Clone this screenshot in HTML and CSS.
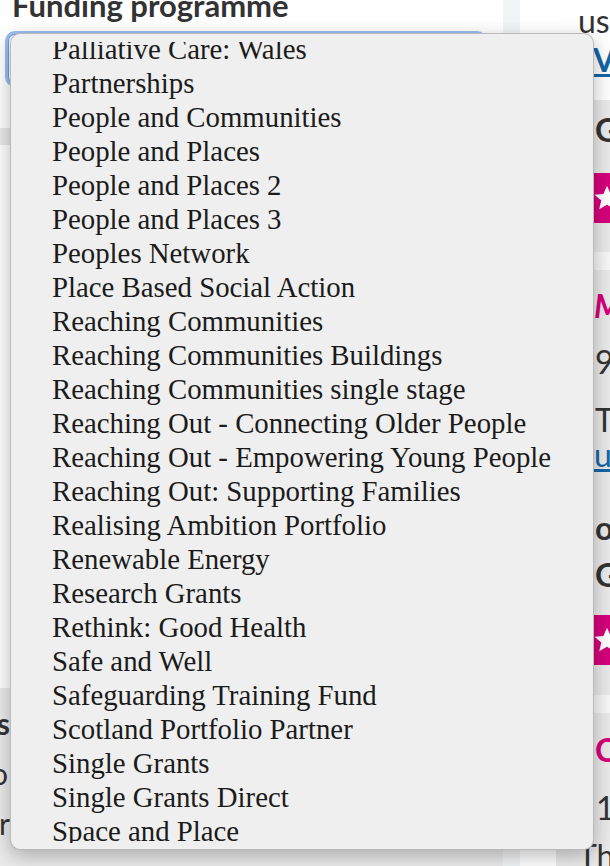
FILE: index.html
```html
<!DOCTYPE html>
<html lang="en">
<head>
<meta charset="utf-8">
<title>Funding programme</title>
<link rel="stylesheet" href="styles.css">
</head>
<body>
<div class="page">
  <div class="main">
    <h2 class="label">Funding programme</h2>
    <div class="select"></div>
    <div class="band"></div>
    <div class="lower">
      <div class="edge edge-bold">Results</div>
      <div class="para">
        <div class="edge edge-o">Apply to</div>
        <div class="edge">or</div>
      </div>
    </div>
  </div>
  <div class="gutter"></div>
  <div class="spacer"></div>
  <div class="aside">
    <div class="a-top">
      <div class="rl l1">useful</div>
      <div class="rl ind-15 l2"><a class="link" href="#">View all</a></div>
    </div>
    <div class="card card-1">
      <div class="rl rb ind-17 g1">Grants</div>
      <div class="pink p1"><svg viewBox="0 0 24 24" width="28" height="28"><path fill="#fff" d="M12 1.5l3.1 7 7.6.7-5.8 5 1.8 7.5L12 17.8l-6.7 3.9 1.8-7.5-5.8-5 7.6-.7z"/></svg></div>
    </div>
    <div class="gap"></div>
    <div class="card card-2">
      <div class="rh ind-16 h1">Music</div>
      <div class="rl ind-17 d1">9 May</div>
      <div class="rp ind-17 t1">The</div>
      <div class="rp ind-16"><a class="link" href="#">ultimate</a></div>
      <div class="rl rb ind-17 o1">online</div>
      <div class="rl rb ind-17 g2">Grants</div>
      <div class="pink p2"><svg viewBox="0 0 24 24" width="28" height="28"><path fill="#fff" d="M12 1.5l3.1 7 7.6.7-5.8 5 1.8 7.5L12 17.8l-6.7 3.9 1.8-7.5-5.8-5 7.6-.7z"/></svg></div>
    </div>
    <div class="gap"></div>
    <div class="card card-3">
      <div class="rh rh-up ind-17 h2">Community</div>
      <div class="rl ind-18 d2">1 June</div>
      <div class="rl t2">The</div>
    </div>
  </div>
</div>

<div class="popup">
  <div class="viewport">
    <ul class="list">
      <li>Palliative Care: Wales</li>
      <li>Partnerships</li>
      <li>People and Communities</li>
      <li>People and Places</li>
      <li>People and Places 2</li>
      <li>People and Places 3</li>
      <li>Peoples Network</li>
      <li>Place Based Social Action</li>
      <li>Reaching Communities</li>
      <li>Reaching Communities Buildings</li>
      <li>Reaching Communities single stage</li>
      <li>Reaching Out - Connecting Older People</li>
      <li>Reaching Out - Empowering Young People</li>
      <li>Reaching Out: Supporting Families</li>
      <li>Realising Ambition Portfolio</li>
      <li>Renewable Energy</li>
      <li>Research Grants</li>
      <li>Rethink: Good Health</li>
      <li>Safe and Well</li>
      <li>Safeguarding Training Fund</li>
      <li>Scotland Portfolio Partner</li>
      <li>Single Grants</li>
      <li>Single Grants Direct</li>
      <li>Space and Place</li>
    </ul>
  </div>
</div>
</body>
</html>
```

FILE: styles.css
```css
html, body {
  margin: 0;
  padding: 0;
  width: 610px;
  height: 866px;
  overflow: hidden;
  background: #ffffff;
  font-family: Lato, "Open Sans", Arial, sans-serif;
  color: #333333;
}

.page {
  display: flex;
  height: 866px;
}

.main {
  width: 503px;
  flex: none;
  display: flex;
  flex-direction: column;
}

.label {
  margin: -10px 0 0;
  padding-left: 12px;
  font-size: 31px;
  line-height: 31px;
  font-weight: 700;
  color: #333333;
  white-space: nowrap;
}

.select {
  margin: 13px 0 0 8px;
  width: 476px;
  height: 50px;
  box-sizing: border-box;
  border: 1px solid #6a9de8;
  border-radius: 7px;
  box-shadow: 0 0 0 3px #9bbef0;
  background: #ffffff;
}

.band {
  margin-top: 44px;
  height: 17px;
  background: #e8e8e8;
}

.lower {
  margin-top: auto;
  height: 178px;
  box-sizing: border-box;
  padding-top: 17px;
  background: #ebebeb;
}

.edge {
  width: 10px;
  display: flex;
  justify-content: flex-end;
  overflow: hidden;
  white-space: nowrap;
  font-size: 30px;
  line-height: 50px;
  color: #333333;
}

.edge-bold {
  font-weight: 700;
  line-height: 36px;
}

.edge-o {
  width: 8px;
}

.para {
  margin-top: 7px;
}

.gutter {
  width: 17px;
  flex: none;
  background: #f3f4f5;
}

.spacer {
  width: 36px;
  flex: none;
}

.aside {
  flex: 1;
  overflow: hidden;
  display: flex;
  flex-direction: column;
}

.a-top {
  height: 100px;
  flex: none;
  background: #ffffff;
}

.card {
  background: #eaeaea;
  flex: none;
  display: flex;
  flex-direction: column;
}

.card-1 { height: 152px; padding-top: 10px; box-sizing: border-box; }
.card-2 { height: 425px; }
.card-3 { flex: 1; }

.gap {
  height: 18px;
  flex: none;
  background: #f7f7f7;
}

.rl, .rh, .rp {
  white-space: nowrap;
  font-size: 32px;
  line-height: 40px;
  height: 40px;
  padding-left: 22px;
  color: #333333;
}

.rp {
  line-height: 35px;
  height: 35px;
}

.rb { font-weight: 700; }

.rh {
  font-weight: 700;
  font-style: italic;
  color: #d6007b;
}

.rh-up { font-style: normal; }

.ind-15 { padding-left: 37px; }
.ind-16 { padding-left: 38px; }
.ind-17 { padding-left: 39px; }
.ind-18 { padding-left: 40px; }

.link {
  color: #1565a6;
  font-weight: 700;
  text-decoration: underline;
}

.rp .link { font-weight: 400; }

.l1 { margin-top: 1px; }
.l2 { margin-top: -1px; }
.g1 { margin-top: 0; }
.p1 { margin-top: 23px; }
.h1 { margin-top: 16px; }
.d1 { margin-top: 16px; }
.t1 { margin-top: 20px; }
.o1 { margin-top: 36px; }
.g2 { margin-top: 7px; }
.p2 { margin-top: 20px; }
.h2 { margin-top: 17px; }
.d2 { margin-top: 18px; }
.t2 { margin-top: 8px; }

.pink {
  margin-left: 26px;
  width: 50px;
  height: 50px;
  flex: none;
  background: #d6007b;
  display: flex;
  align-items: center;
  justify-content: center;
}

.popup {
  position: absolute;
  left: 10px;
  top: 33px;
  width: 584px;
  height: 817px;
  box-sizing: border-box;
  padding: 8px 0 6px;
  background: #efefef;
  border: 1px solid rgba(0, 0, 0, 0.22);
  border-radius: 10px;
  box-shadow: 0 6px 20px rgba(0, 0, 0, 0.28);
}

.viewport {
  height: 801px;
  overflow: hidden;
}

.list {
  margin: -10px 0 0;
  padding: 0 0 0 41px;
  list-style: none;
  font-family: "Liberation Serif", "Times New Roman", serif;
  font-size: 28.8px;
  line-height: 34px;
  color: #1b1b1b;
  white-space: nowrap;
}
```
